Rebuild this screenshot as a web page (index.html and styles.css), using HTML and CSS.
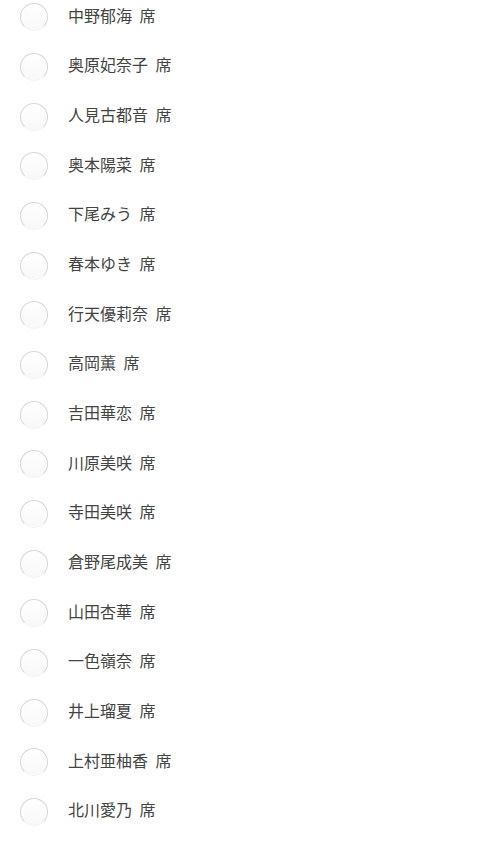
FILE: index.html
```
<!DOCTYPE html>
<html lang="ja">

<head>
    <meta charset="UTF-8">
    <meta name="viewport" content="width=device-width, initial-scale=1.0">
    <title>席</title>
    <link rel="stylesheet" href="styles.css">
</head>

<body>
    <ul class="seat-list">
        <li class="seat"><span class="radio"></span><span class="name">中野郁海 席</span></li>
        <li class="seat"><span class="radio"></span><span class="name">奥原妃奈子 席</span></li>
        <li class="seat"><span class="radio"></span><span class="name">人見古都音 席</span></li>
        <li class="seat"><span class="radio"></span><span class="name">奥本陽菜 席</span></li>
        <li class="seat"><span class="radio"></span><span class="name">下尾みう 席</span></li>
        <li class="seat"><span class="radio"></span><span class="name">春本ゆき 席</span></li>
        <li class="seat"><span class="radio"></span><span class="name">行天優莉奈 席</span></li>
        <li class="seat"><span class="radio"></span><span class="name">高岡薫 席</span></li>
        <li class="seat"><span class="radio"></span><span class="name">吉田華恋 席</span></li>
        <li class="seat"><span class="radio"></span><span class="name">川原美咲 席</span></li>
        <li class="seat"><span class="radio"></span><span class="name">寺田美咲 席</span></li>
        <li class="seat"><span class="radio"></span><span class="name">倉野尾成美 席</span></li>
        <li class="seat"><span class="radio"></span><span class="name">山田杏華 席</span></li>
        <li class="seat"><span class="radio"></span><span class="name">一色嶺奈 席</span></li>
        <li class="seat"><span class="radio"></span><span class="name">井上瑠夏 席</span></li>
        <li class="seat"><span class="radio"></span><span class="name">上村亜柚香 席</span></li>
        <li class="seat"><span class="radio"></span><span class="name">北川愛乃 席</span></li>
    </ul>
</body>

</html>
```

FILE: styles.css
```
body {
    margin: 0;
    padding: 0;
    background-color: #ffffff;
    font-family: "Noto Sans CJK JP", "Noto Sans", sans-serif;
}

.seat-list {
    list-style: none;
    margin: -10px 0 0;
    padding: 0;
}

.seat {
    height: 49.67px;
    display: flex;
    align-items: center;
    padding-left: 20px;
    gap: 20px;
}

.radio {
    width: 28px;
    height: 28px;
    margin-top: 5px;
    box-sizing: border-box;
    border-radius: 50%;
    border: 1px solid #d8d8d8;
    border-bottom-color: #f4f4f4;
    background: linear-gradient(#ffffff, #f8f8f8);
    flex-shrink: 0;
}

.name {
    font-size: 16px;
    color: #444;
    line-height: 1;
    word-spacing: 4px;
}
```
